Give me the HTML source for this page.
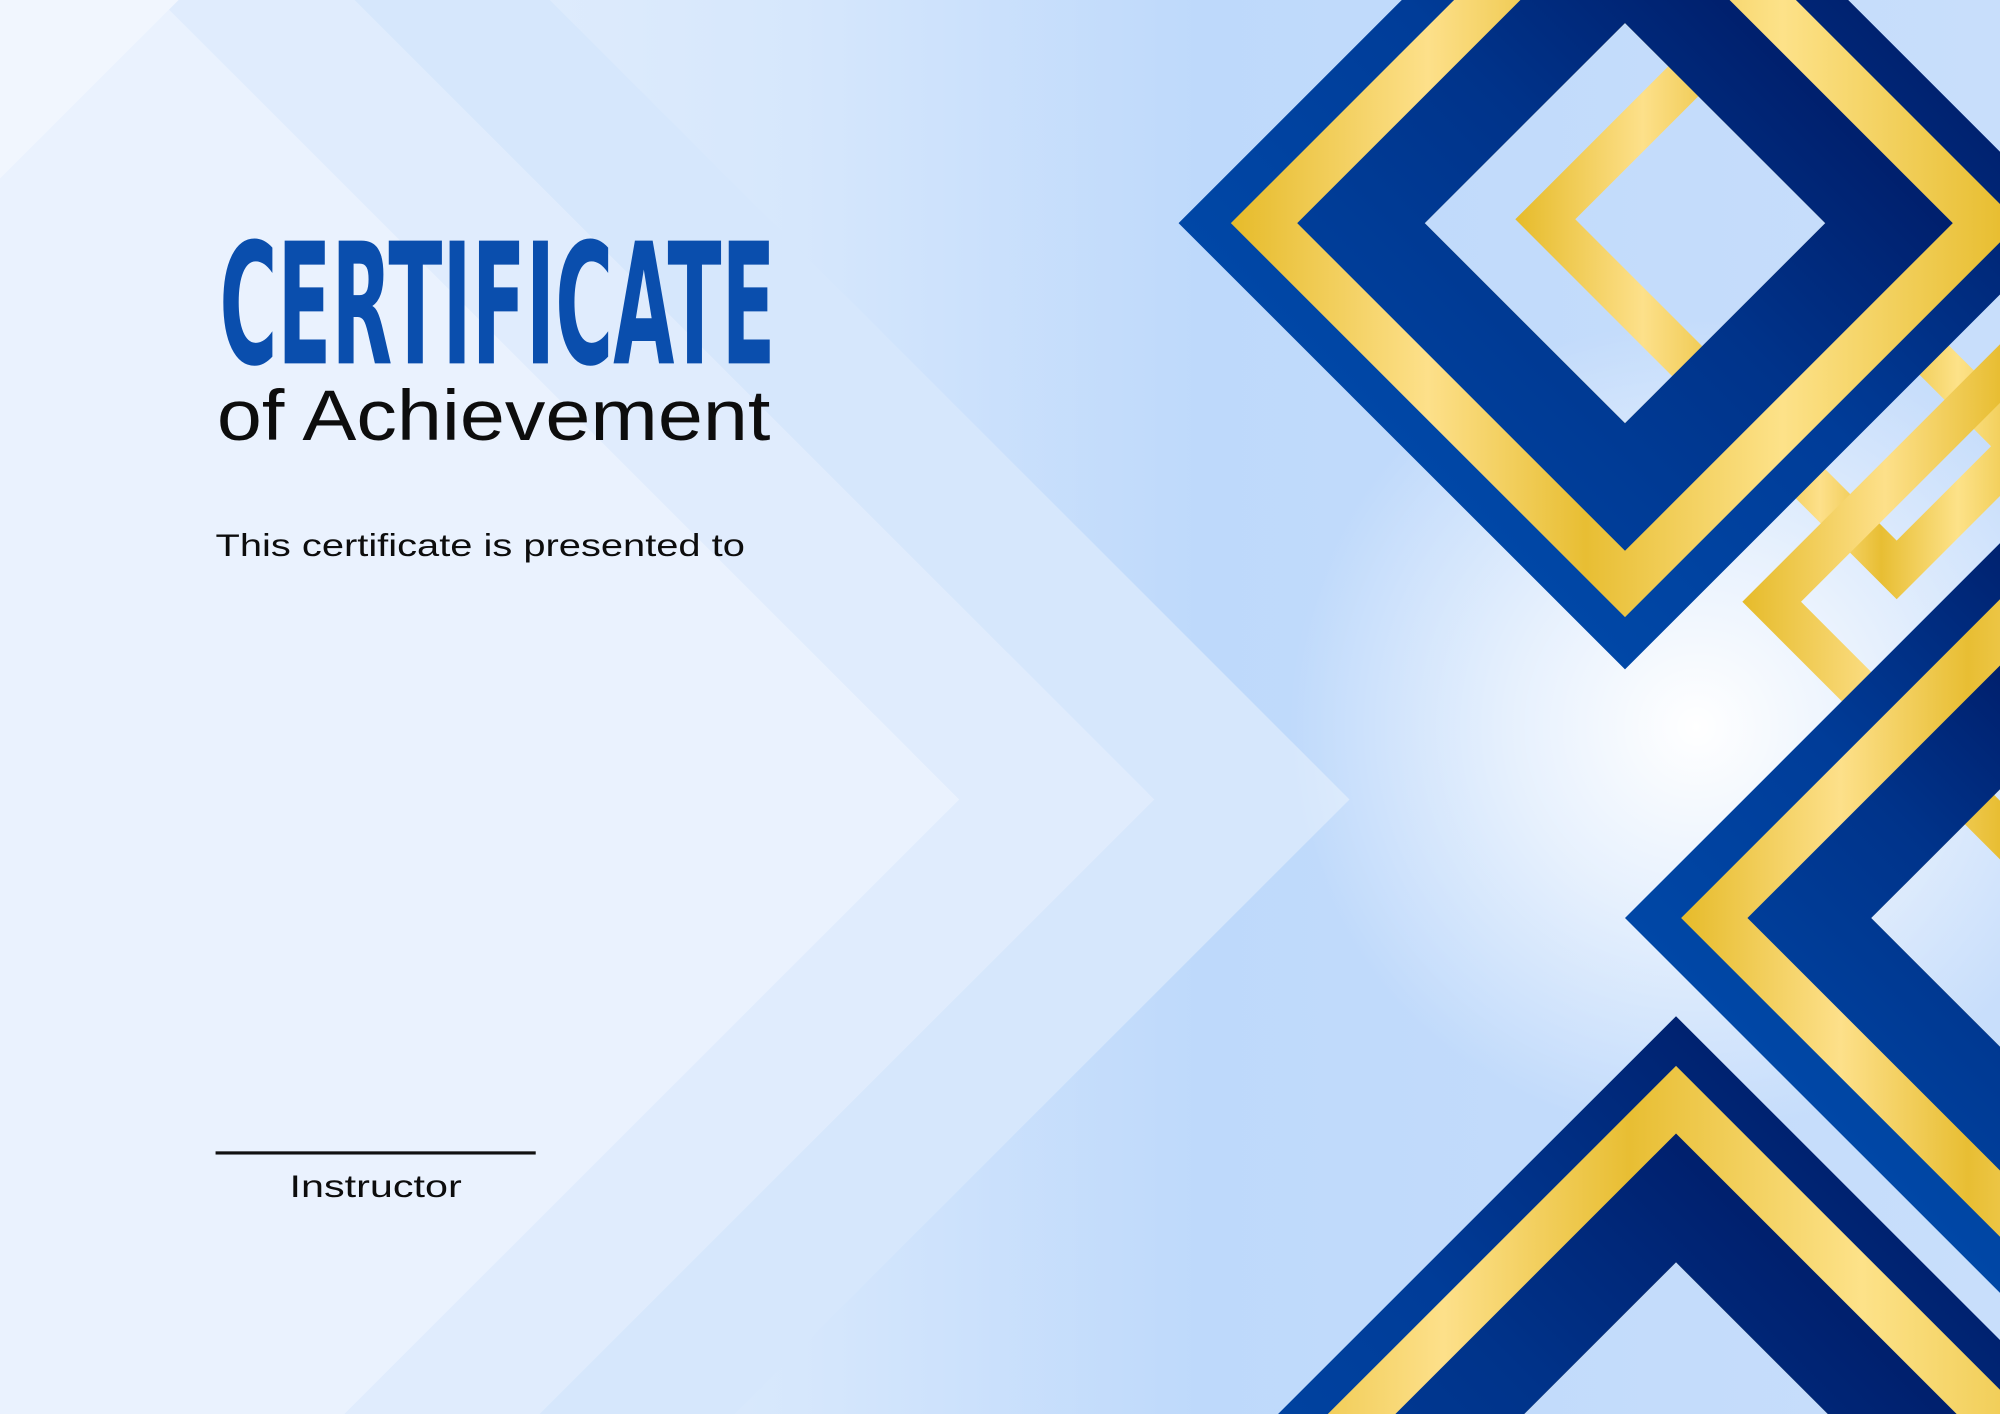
<!DOCTYPE html>
<html><head><meta charset="utf-8"><style>
html,body{margin:0;padding:0;width:2000px;height:1414px;overflow:hidden;background:#e6effc}
svg{display:block;position:absolute;left:0;top:0}
</style></head><body>
<svg width="2000" height="1414" viewBox="0 0 1568 1109" preserveAspectRatio="none" xmlns="http://www.w3.org/2000/svg">
<defs>
<linearGradient id="bg" x1="0" y1="0" x2="1" y2="0">
<stop offset="0" stop-color="#eef4fe"/><stop offset="0.4" stop-color="#d6e7fc"/><stop offset="0.6" stop-color="#bed9fb"/><stop offset="1" stop-color="#c8defb"/></linearGradient>
<radialGradient id="glow" cx="1330" cy="570" r="320" gradientUnits="userSpaceOnUse">
<stop offset="0" stop-color="#ffffff" stop-opacity="1"/><stop offset="0.45" stop-color="#ffffff" stop-opacity="0.6"/><stop offset="1" stop-color="#ffffff" stop-opacity="0"/></radialGradient>
<linearGradient id="blue" x1="0" y1="1" x2="1" y2="0">
<stop offset="0" stop-color="#0052b4"/><stop offset="0.5" stop-color="#003c98"/><stop offset="1" stop-color="#000848"/></linearGradient>
<linearGradient id="dark" x1="0" y1="1" x2="1" y2="0">
<stop offset="0" stop-color="#0048a8"/><stop offset="0.5" stop-color="#00338a"/><stop offset="1" stop-color="#000c50"/></linearGradient>
<linearGradient id="gold" x1="0" y1="0" x2="1" y2="0">
<stop offset="0" stop-color="#e6bb2a"/><stop offset="0.25" stop-color="#fde08a"/><stop offset="0.45" stop-color="#e8be33"/><stop offset="0.7" stop-color="#fde289"/><stop offset="1" stop-color="#e6bb2a"/></linearGradient>
</defs>
<rect width="1568" height="1109" fill="url(#bg)"/>
<polygon points="431,0 1058,627 431,1254 -200,1254 -200,0" fill="#d6e7fc"/>
<polygon points="278,0 905,627 278,1254 -200,1254 -200,0" fill="#e0ecfd"/>
<polygon points="125,0 752,627 125,1254 -200,1254 -200,0" fill="#eaf2fe"/>
<polygon points="0,0 140,0 0,140" fill="#f1f6fe"/>
<rect width="1568" height="1109" fill="url(#glow)"/>
<!-- gold outlines -->
<path d="M1388,-28 L1588,172 L1388,372 L1188,172 Z M1388,19 L1235,172 L1388,325 L1541,172 Z" fill="url(#gold)" fill-rule="evenodd"/>
<path d="M1487,230 L1607,350 L1487,470 L1367,350 Z M1487,276 L1413,350 L1487,424 L1561,350 Z" fill="url(#gold)" fill-rule="evenodd"/>
<path d="M1590,248 L1814,472 L1590,696 L1366,472 Z M1590,294 L1412,472 L1590,650 L1768,472 Z" fill="url(#gold)" fill-rule="evenodd"/>
<!-- top diamond -->
<path d="M1274,-175 L1624,175 L1274,525 L924,175 Z M1274,18 L1117,175 L1274,332 L1431,175 Z" fill="url(#blue)" fill-rule="evenodd"/>
<path d="M1274,-134 L1583,175 L1274,484 L965,175 Z M1274,18 L1117,175 L1274,332 L1431,175 Z" fill="url(#gold)" fill-rule="evenodd"/>
<path d="M1274,-82 L1531,175 L1274,432 L1017,175 Z M1274,18 L1117,175 L1274,332 L1431,175 Z" fill="url(#dark)" fill-rule="evenodd"/>
<!-- right diamond -->
<path d="M1568,426 L1862,720 L1568,1014 L1274,720 Z M1568,619 L1467,720 L1568,821 L1669,720 Z" fill="url(#blue)" fill-rule="evenodd"/>
<path d="M1568,470 L1818,720 L1568,970 L1318,720 Z M1568,619 L1467,720 L1568,821 L1669,720 Z" fill="url(#gold)" fill-rule="evenodd"/>
<path d="M1568,522 L1766,720 L1568,918 L1370,720 Z M1568,619 L1467,720 L1568,821 L1669,720 Z" fill="url(#dark)" fill-rule="evenodd"/>
<!-- bottom diamond -->
<path d="M1314,797 L1717,1200 L1314,1603 L911,1200 Z M1314,990 L1104,1200 L1314,1410 L1524,1200 Z" fill="url(#blue)" fill-rule="evenodd"/>
<path d="M1314,836 L1678,1200 L1314,1564 L950,1200 Z M1314,990 L1104,1200 L1314,1410 L1524,1200 Z" fill="url(#gold)" fill-rule="evenodd"/>
<path d="M1314,889 L1625,1200 L1314,1511 L1003,1200 Z M1314,990 L1104,1200 L1314,1410 L1524,1200 Z" fill="url(#dark)" fill-rule="evenodd"/>
<!-- text -->
<text x="172" y="285" font-family="'DejaVu Sans Condensed','Liberation Sans Narrow','Liberation Sans',sans-serif" font-weight="700" font-size="132" fill="#0a4ead" textLength="436" lengthAdjust="spacingAndGlyphs">CERTIFICATE</text>
<text x="170" y="345" font-family="'Liberation Sans',sans-serif" font-size="56" fill="#0d0d0d" textLength="434" lengthAdjust="spacingAndGlyphs">of Achievement</text>
<text x="169" y="436" font-family="'Liberation Sans',sans-serif" font-size="25" fill="#0d0d0d" textLength="415" lengthAdjust="spacingAndGlyphs">This certificate is presented to</text>
<rect x="169" y="903" width="251" height="2.5" fill="#111"/>
<text x="227" y="939" font-family="'Liberation Sans',sans-serif" font-size="25" fill="#0d0d0d" textLength="135" lengthAdjust="spacingAndGlyphs">Instructor</text>
</svg>
</body></html>
